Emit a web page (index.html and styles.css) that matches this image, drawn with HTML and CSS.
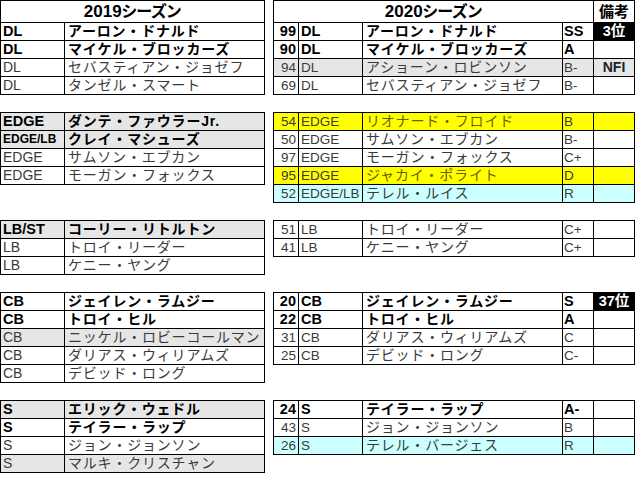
FILE: index.html
```html
<!DOCTYPE html>
<html lang="ja">
<head>
<meta charset="utf-8">
<link rel="stylesheet" href="styles.css">
</head>
<body>
<div class="sheet">
  <!-- DL -->
  <div class="tbl tl">
    <div class="row hdr"><div class="c s2">2019<span class="ja">シーズン</span></div></div>
    <div class="row b"><div class="c">DL</div><div class="c nm">アーロン・ドナルド</div></div>
    <div class="row b"><div class="c">DL</div><div class="c nm">マイケル・ブロッカーズ</div></div>
    <div class="row"><div class="c">DL</div><div class="c nm">セバスティアン・ジョゼフ</div></div>
    <div class="row"><div class="c">DL</div><div class="c nm">タンゼル・スマート</div></div>
  </div>
  <div class="tbl tr">
    <div class="row hdr"><div class="c s4">2020<span class="ja">シーズン</span></div><div class="c note">備考</div></div>
    <div class="row b"><div class="c no">99</div><div class="c">DL</div><div class="c nm">アーロン・ドナルド</div><div class="c gr">SS</div><div class="c note rank">3位</div></div>
    <div class="row b"><div class="c no">90</div><div class="c">DL</div><div class="c nm">マイケル・ブロッカーズ</div><div class="c gr">A</div><div class="c note"></div></div>
    <div class="row gray"><div class="c no">94</div><div class="c">DL</div><div class="c nm">アショーン・ロビンソン</div><div class="c gr">B-</div><div class="c note nfi">NFI</div></div>
    <div class="row"><div class="c no">69</div><div class="c">DL</div><div class="c nm">セバスティアン・ジョゼフ</div><div class="c gr">B-</div><div class="c note"></div></div>
  </div>

  <!-- EDGE -->
  <div class="tbl tl">
    <div class="row b gray"><div class="c">EDGE</div><div class="c nm">ダンテ・ファウラーJr.</div></div>
    <div class="row b gray"><div class="c small">EDGE/LB</div><div class="c nm">クレイ・マシューズ</div></div>
    <div class="row"><div class="c">EDGE</div><div class="c nm">サムソン・エブカン</div></div>
    <div class="row"><div class="c">EDGE</div><div class="c nm">モーガン・フォックス</div></div>
  </div>
  <div class="tbl tr">
    <div class="row yellow"><div class="c no">54</div><div class="c">EDGE</div><div class="c nm">リオナード・フロイド</div><div class="c gr">B</div><div class="c note"></div></div>
    <div class="row"><div class="c no">50</div><div class="c">EDGE</div><div class="c nm">サムソン・エブカン</div><div class="c gr">B-</div><div class="c note"></div></div>
    <div class="row"><div class="c no">97</div><div class="c">EDGE</div><div class="c nm">モーガン・フォックス</div><div class="c gr">C+</div><div class="c note"></div></div>
    <div class="row yellow"><div class="c no">95</div><div class="c">EDGE</div><div class="c nm">ジャカイ・ポライト</div><div class="c gr">D</div><div class="c note"></div></div>
    <div class="row cyan"><div class="c no">52</div><div class="c">EDGE/LB</div><div class="c nm">テレル・ルイス</div><div class="c gr">R</div><div class="c note"></div></div>
  </div>

  <!-- LB -->
  <div class="tbl tl">
    <div class="row b gray"><div class="c">LB/ST</div><div class="c nm">コーリー・リトルトン</div></div>
    <div class="row"><div class="c">LB</div><div class="c nm">トロイ・リーダー</div></div>
    <div class="row"><div class="c">LB</div><div class="c nm">ケニー・ヤング</div></div>
  </div>
  <div class="tbl tr">
    <div class="row"><div class="c no">51</div><div class="c">LB</div><div class="c nm">トロイ・リーダー</div><div class="c gr">C+</div><div class="c note"></div></div>
    <div class="row"><div class="c no">41</div><div class="c">LB</div><div class="c nm">ケニー・ヤング</div><div class="c gr">C+</div><div class="c note"></div></div>
  </div>

  <!-- CB -->
  <div class="tbl tl">
    <div class="row b"><div class="c">CB</div><div class="c nm">ジェイレン・ラムジー</div></div>
    <div class="row b"><div class="c">CB</div><div class="c nm">トロイ・ヒル</div></div>
    <div class="row gray"><div class="c">CB</div><div class="c nm">ニッケル・ロビーコールマン</div></div>
    <div class="row"><div class="c">CB</div><div class="c nm">ダリアス・ウィリアムズ</div></div>
    <div class="row"><div class="c">CB</div><div class="c nm">デビッド・ロング</div></div>
  </div>
  <div class="tbl tr">
    <div class="row b"><div class="c no">20</div><div class="c">CB</div><div class="c nm">ジェイレン・ラムジー</div><div class="c gr">S</div><div class="c note rank">37位</div></div>
    <div class="row b"><div class="c no">22</div><div class="c">CB</div><div class="c nm">トロイ・ヒル</div><div class="c gr">A</div><div class="c note"></div></div>
    <div class="row"><div class="c no">31</div><div class="c">CB</div><div class="c nm">ダリアス・ウィリアムズ</div><div class="c gr">C</div><div class="c note"></div></div>
    <div class="row"><div class="c no">25</div><div class="c">CB</div><div class="c nm">デビッド・ロング</div><div class="c gr">C-</div><div class="c note"></div></div>
  </div>

  <!-- S -->
  <div class="tbl tl">
    <div class="row b gray"><div class="c">S</div><div class="c nm">エリック・ウェドル</div></div>
    <div class="row b"><div class="c">S</div><div class="c nm">テイラー・ラップ</div></div>
    <div class="row"><div class="c">S</div><div class="c nm">ジョン・ジョンソン</div></div>
    <div class="row gray"><div class="c">S</div><div class="c nm">マルキ・クリスチャン</div></div>
  </div>
  <div class="tbl tr">
    <div class="row b"><div class="c no">24</div><div class="c">S</div><div class="c nm">テイラー・ラップ</div><div class="c gr">A-</div><div class="c note"></div></div>
    <div class="row"><div class="c no">43</div><div class="c">S</div><div class="c nm">ジョン・ジョンソン</div><div class="c gr">B</div><div class="c note"></div></div>
    <div class="row cyan"><div class="c no">26</div><div class="c">S</div><div class="c nm">テレル・バージェス</div><div class="c gr">R</div><div class="c note"></div></div>
  </div>
</div>
</body>
</html>
```

FILE: styles.css
```css
* { box-sizing: border-box; }
html, body { margin: 0; padding: 0; background: #fff; }
body {
  font-family: "Liberation Sans", "Noto Sans CJK JP", sans-serif;
  font-size: 14px;
  color: #3a3a3a;
  width: 639px;
  height: 479px;
  overflow: hidden;
}
.sheet {
  display: grid;
  grid-template-columns: 265px 362px;
  column-gap: 8px;
  row-gap: 17px;
  align-items: start;
}
.tbl {
  border-top: 1px solid #000;
  border-left: 1px solid #000;
}
.tr { font-size: 13.5px; }
.row {
  display: grid;
  height: 18px;
}
.tl .row { grid-template-columns: 64px 200px; }
.tr .row { grid-template-columns: 25px 64px 200px 31px 41px; }
.c {
  border-right: 1px solid #000;
  border-bottom: 1px solid #000;
  height: 100%;
  line-height: 17px;
  padding-left: 2px;
  white-space: nowrap;
  overflow: hidden;
}
.b .c { font-size: 14.5px; }
.c.nm, .b .c.nm {
  font-size: 14px;
  letter-spacing: 0.8px;
  padding-left: 3px;
}
.no { text-align: right; padding-left: 0; padding-right: 2px; }
.gr { padding-left: 1px; }
.note { text-align: center; padding-left: 0; }
.b .c.small { font-size: 12px; }

.b { color: #000; font-weight: bold; }
.gray { background: #e7e6e6; }
.yellow { background: #ffff00; }
.yellow .nm { color: #6b6000; }
.cyan { background: #ccffff; }

.hdr { height: 22px; color: #000; font-weight: bold; }
.hdr .c {
  line-height: 21px;
  font-size: 17px;
  text-align: center;
  padding-left: 0;
}
.hdr .ja { font-size: 16px; font-feature-settings: "palt"; }
.hdr .s2 { grid-column: 1 / span 2; }
.hdr .s4 { grid-column: 1 / span 4; }
.hdr .note { font-size: 15px; }

.rank {
  background: #000;
  color: #fff;
  font-weight: bold;
}
.b .c.rank { font-size: 14.5px; }
.nfi { font-weight: bold; color: #222; font-size: 14px; }
```
